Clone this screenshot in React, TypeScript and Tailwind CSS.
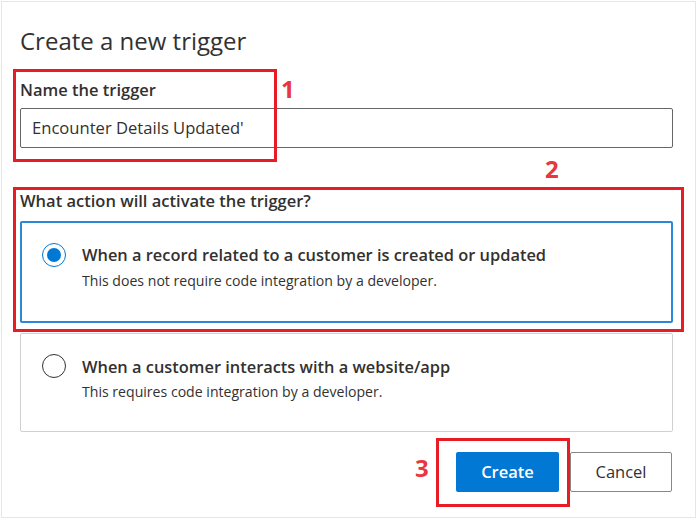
import React from 'react';

const RadioMark: React.FC<{ checked: boolean }> = ({ checked }) => (
  <span
    className={
      checked
        ? 'flex h-[24px] w-[24px] shrink-0 items-center justify-center rounded-full border border-[#0078d4]'
        : 'flex h-[24px] w-[24px] shrink-0 items-center justify-center rounded-full border border-[#323130]'
    }
  >
    {checked && <span className="h-[14px] w-[14px] rounded-full bg-[#0078d4]" />}
  </span>
);

const App: React.FC = () => {
  return (
    <div className="relative h-[519px] w-[697px] bg-white p-px font-['Open_Sans',sans-serif] text-[#323130]">
      <div className="h-full border border-[#e6e6e6] pl-[18px] pr-[22px] pt-[22px]">
        <h1 className="text-[24px] leading-[34px]">Create a new trigger</h1>

        {/* Name */}
        <div className="mt-[20px] text-[16.5px] font-semibold leading-[24px]">Name the trigger</div>
        <div className="mt-[6px] flex h-[40px] items-center rounded-[2px] border border-[#666] pl-[11px] text-[16.6px]">
          Encounter Details Updated'
        </div>

        {/* Action */}
        <div className="mt-[41px] text-[16.5px] font-semibold leading-[24px]">
          What action will activate the trigger?
        </div>
        <div className="mt-[8px] flex h-[102px] items-start gap-[16px] rounded-[2px] border-2 border-[#2b88d8] pl-[20px] pt-[20px]">
          <RadioMark checked />
          <div className="pt-px">
            <div className="text-[16.4px] font-semibold leading-[22px]">
              When a record related to a customer is created or updated
            </div>
            <div className="mt-[6px] text-[14.1px] leading-[18px]">
              This does not require code integration by a developer.
            </div>
          </div>
        </div>
        <div className="mt-[10px] flex h-[99px] items-start gap-[16px] rounded-[2px] border border-[#d2d0ce] pl-[21px] pt-[20px]">
          <RadioMark checked={false} />
          <div className="pt-[2px]">
            <div className="text-[16.4px] font-semibold leading-[22px]">
              When a customer interacts with a website/app
            </div>
            <div className="mt-[5px] text-[14.1px] leading-[18px]">
              This requires code integration by a developer.
            </div>
          </div>
        </div>

        {/* Buttons */}
        <div className="mr-px mt-[20px] flex justify-end gap-[11px]">
          <button className="h-[40px] w-[103px] rounded-[2px] bg-[#0078d4] text-[16.5px] font-semibold text-white">
            Create
          </button>
          <button className="h-[40px] w-[102px] rounded-[2px] border border-[#8a8886] bg-white text-[16.5px]">
            Cancel
          </button>
        </div>
      </div>

      {/* annotation overlays */}
      <div className="absolute left-[13px] top-[69px] h-[93px] w-[264px] border-[3px] border-[#e81c24]" />
      <div className="absolute left-[13px] top-[187px] h-[145px] w-[671px] border-[3px] border-[#e81c24]" />
      <div className="absolute left-[436px] top-[438px] h-[69px] w-[134px] border-[3px] border-[#e81c24]" />
      <span className="absolute left-[281px] top-[74px] text-[24px] font-bold leading-[30px] text-[#e8383d]">1</span>
      <span className="absolute left-[545px] top-[154px] text-[24px] font-bold leading-[30px] text-[#e8383d]">2</span>
      <span className="absolute left-[415px] top-[453px] text-[24px] font-bold leading-[30px] text-[#e8383d]">3</span>
    </div>
  );
};

export default App;
